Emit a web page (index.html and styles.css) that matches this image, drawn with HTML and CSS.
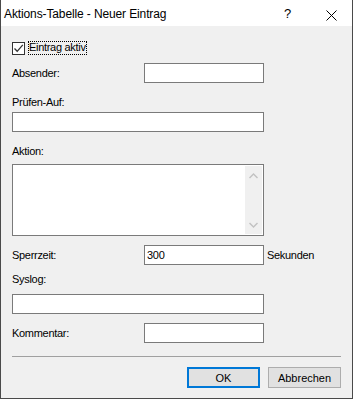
FILE: index.html
```html
<!DOCTYPE html>
<html lang="de">
<head>
<meta charset="utf-8">
<title>Aktions-Tabelle - Neuer Eintrag</title>
<link rel="stylesheet" href="styles.css">
</head>
<body>
<div class="window">
  <div class="titlebar">
    <span class="title">Aktions-Tabelle - Neuer Eintrag</span>
    <span class="help">?</span>
    <span class="close">
      <svg width="11" height="11" viewBox="0 0 11 11"><path d="M0.5 0.5 L10.5 10.5 M10.5 0.5 L0.5 10.5" stroke="#000" stroke-width="1" fill="none"/></svg>
    </span>
  </div>
  <div class="content">
    <div class="check-row">
      <span class="checkbox">
        <svg width="11" height="11" viewBox="0 0 11 11"><path d="M1.5 5.5 L4.2 8.3 L9.8 1.8" stroke="#333" stroke-width="1.3" fill="none"/></svg>
      </span>
      <span class="check-label">Eintrag aktiv</span>
    </div>

    <div class="field-row row-absender">
      <span class="label">Absender:</span>
      <span class="input short"></span>
    </div>

    <div class="label block lbl-pruefen">Prüfen-Auf:</div>
    <div class="input wide in-pruefen"></div>

    <div class="label block lbl-aktion">Aktion:</div>
    <div class="textarea">
      <div class="scrollbar">
        <svg width="9" height="6" viewBox="0 0 9 6"><path d="M0.5 5 L4.5 1 L8.5 5" stroke="#c2c2c2" stroke-width="1.4" fill="none"/></svg>
        <svg width="9" height="6" viewBox="0 0 9 6"><path d="M0.5 1 L4.5 5 L8.5 1" stroke="#c2c2c2" stroke-width="1.4" fill="none"/></svg>
      </div>
    </div>

    <div class="field-row row-sperr">
      <span class="label">Sperrzeit:</span>
      <span class="input short"><span class="value">300</span></span>
      <span class="unit">Sekunden</span>
    </div>

    <div class="label block lbl-syslog">Syslog:</div>
    <div class="input wide in-syslog"></div>

    <div class="field-row row-komm">
      <span class="label">Kommentar:</span>
      <span class="input short"></span>
    </div>

    <div class="separator"></div>

    <div class="buttons">
      <span class="button default">OK</span>
      <span class="button">Abbrechen</span>
    </div>
  </div>
</div>
</body>
</html>
```
FILE: styles.css
```css
html, body {
  margin: 0;
  padding: 0;
  background: #f0f0f0;
}

.window {
  width: 353px;
  height: 399px;
  box-sizing: border-box;
  border: 1px solid #4a4a4a;
  border-top: none;
  background: #f0f0f0;
  font-family: "Liberation Sans", Arial, sans-serif;
  font-size: 11px;
  letter-spacing: -0.3px;
  color: #000;
  display: flex;
  flex-direction: column;
}

.titlebar {
  height: 26px;
  background: #fff;
  display: flex;
  align-items: center;
  position: relative;
}

.title {
  font-size: 12px;
  letter-spacing: -0.12px;
  margin-left: 3px;
  margin-top: 1px;
}

.help {
  position: absolute;
  left: 283px;
  top: 6px;
  font-size: 13px;
  letter-spacing: 0;
}

.close {
  position: absolute;
  left: 325px;
  top: 10px;
  display: flex;
}

.content {
  padding: 0 11px 0 11px;
  display: flex;
  flex-direction: column;
}

.check-row {
  margin-top: 15px;
  height: 14px;
  display: flex;
  align-items: center;
}

.checkbox {
  width: 13px;
  height: 13px;
  box-sizing: border-box;
  border: 1px solid #333;
  background: #fff;
  display: flex;
  align-items: center;
  justify-content: center;
}

.check-label {
  margin-left: 3px;
  height: 14px;
  line-height: 13px;
  padding: 0 1px;
  box-sizing: border-box;
  outline: 1px dotted #000;
  outline-offset: -1px;
}

.label {
  line-height: 14px;
}

.field-row {
  display: flex;
  align-items: center;
  height: 20px;
}

.field-row .label {
  width: 132px;
}

.input {
  display: block;
  height: 20px;
  box-sizing: border-box;
  border: 1px solid #7a7a7a;
  background: #fff;
}

.input.short {
  width: 120px;
  display: flex;
  align-items: center;
}

.input.wide {
  width: 252px;
}

.value {
  padding-left: 2px;
}

.unit {
  margin-left: 3px;
}

.row-absender { margin-top: 8px; }
.lbl-pruefen { margin-top: 12px; }
.in-pruefen { margin-top: 3px; }
.lbl-aktion { margin-top: 12px; }

.textarea {
  margin-top: 6px;
  width: 252px;
  height: 72px;
  box-sizing: border-box;
  border: 1px solid #7a7a7a;
  background: #fff;
  display: flex;
  justify-content: flex-end;
  padding: 1px;
}

.scrollbar {
  width: 17px;
  background: #f0f0f0;
  display: flex;
  flex-direction: column;
  align-items: center;
  justify-content: space-between;
  padding: 7px 0 6px;
  box-sizing: border-box;
}

.row-sperr { margin-top: 9px; }
.lbl-syslog { margin-top: 7px; }
.in-syslog { margin-top: 8px; }
.row-komm { margin-top: 9px; }

.separator {
  margin-top: 13px;
  height: 1px;
  background: #a0a0a0;
  width: 329px;
}

.buttons {
  margin-top: 10px;
  display: flex;
  justify-content: flex-end;
  gap: 8px;
  padding-right: 0;
}

.button {
  width: 73px;
  height: 21px;
  box-sizing: border-box;
  border: 1px solid #adadad;
  background: #e1e1e1;
  display: flex;
  align-items: center;
  justify-content: center;
  letter-spacing: 0;
}

.button.default {
  border: 2px solid #0078d7;
}
```
